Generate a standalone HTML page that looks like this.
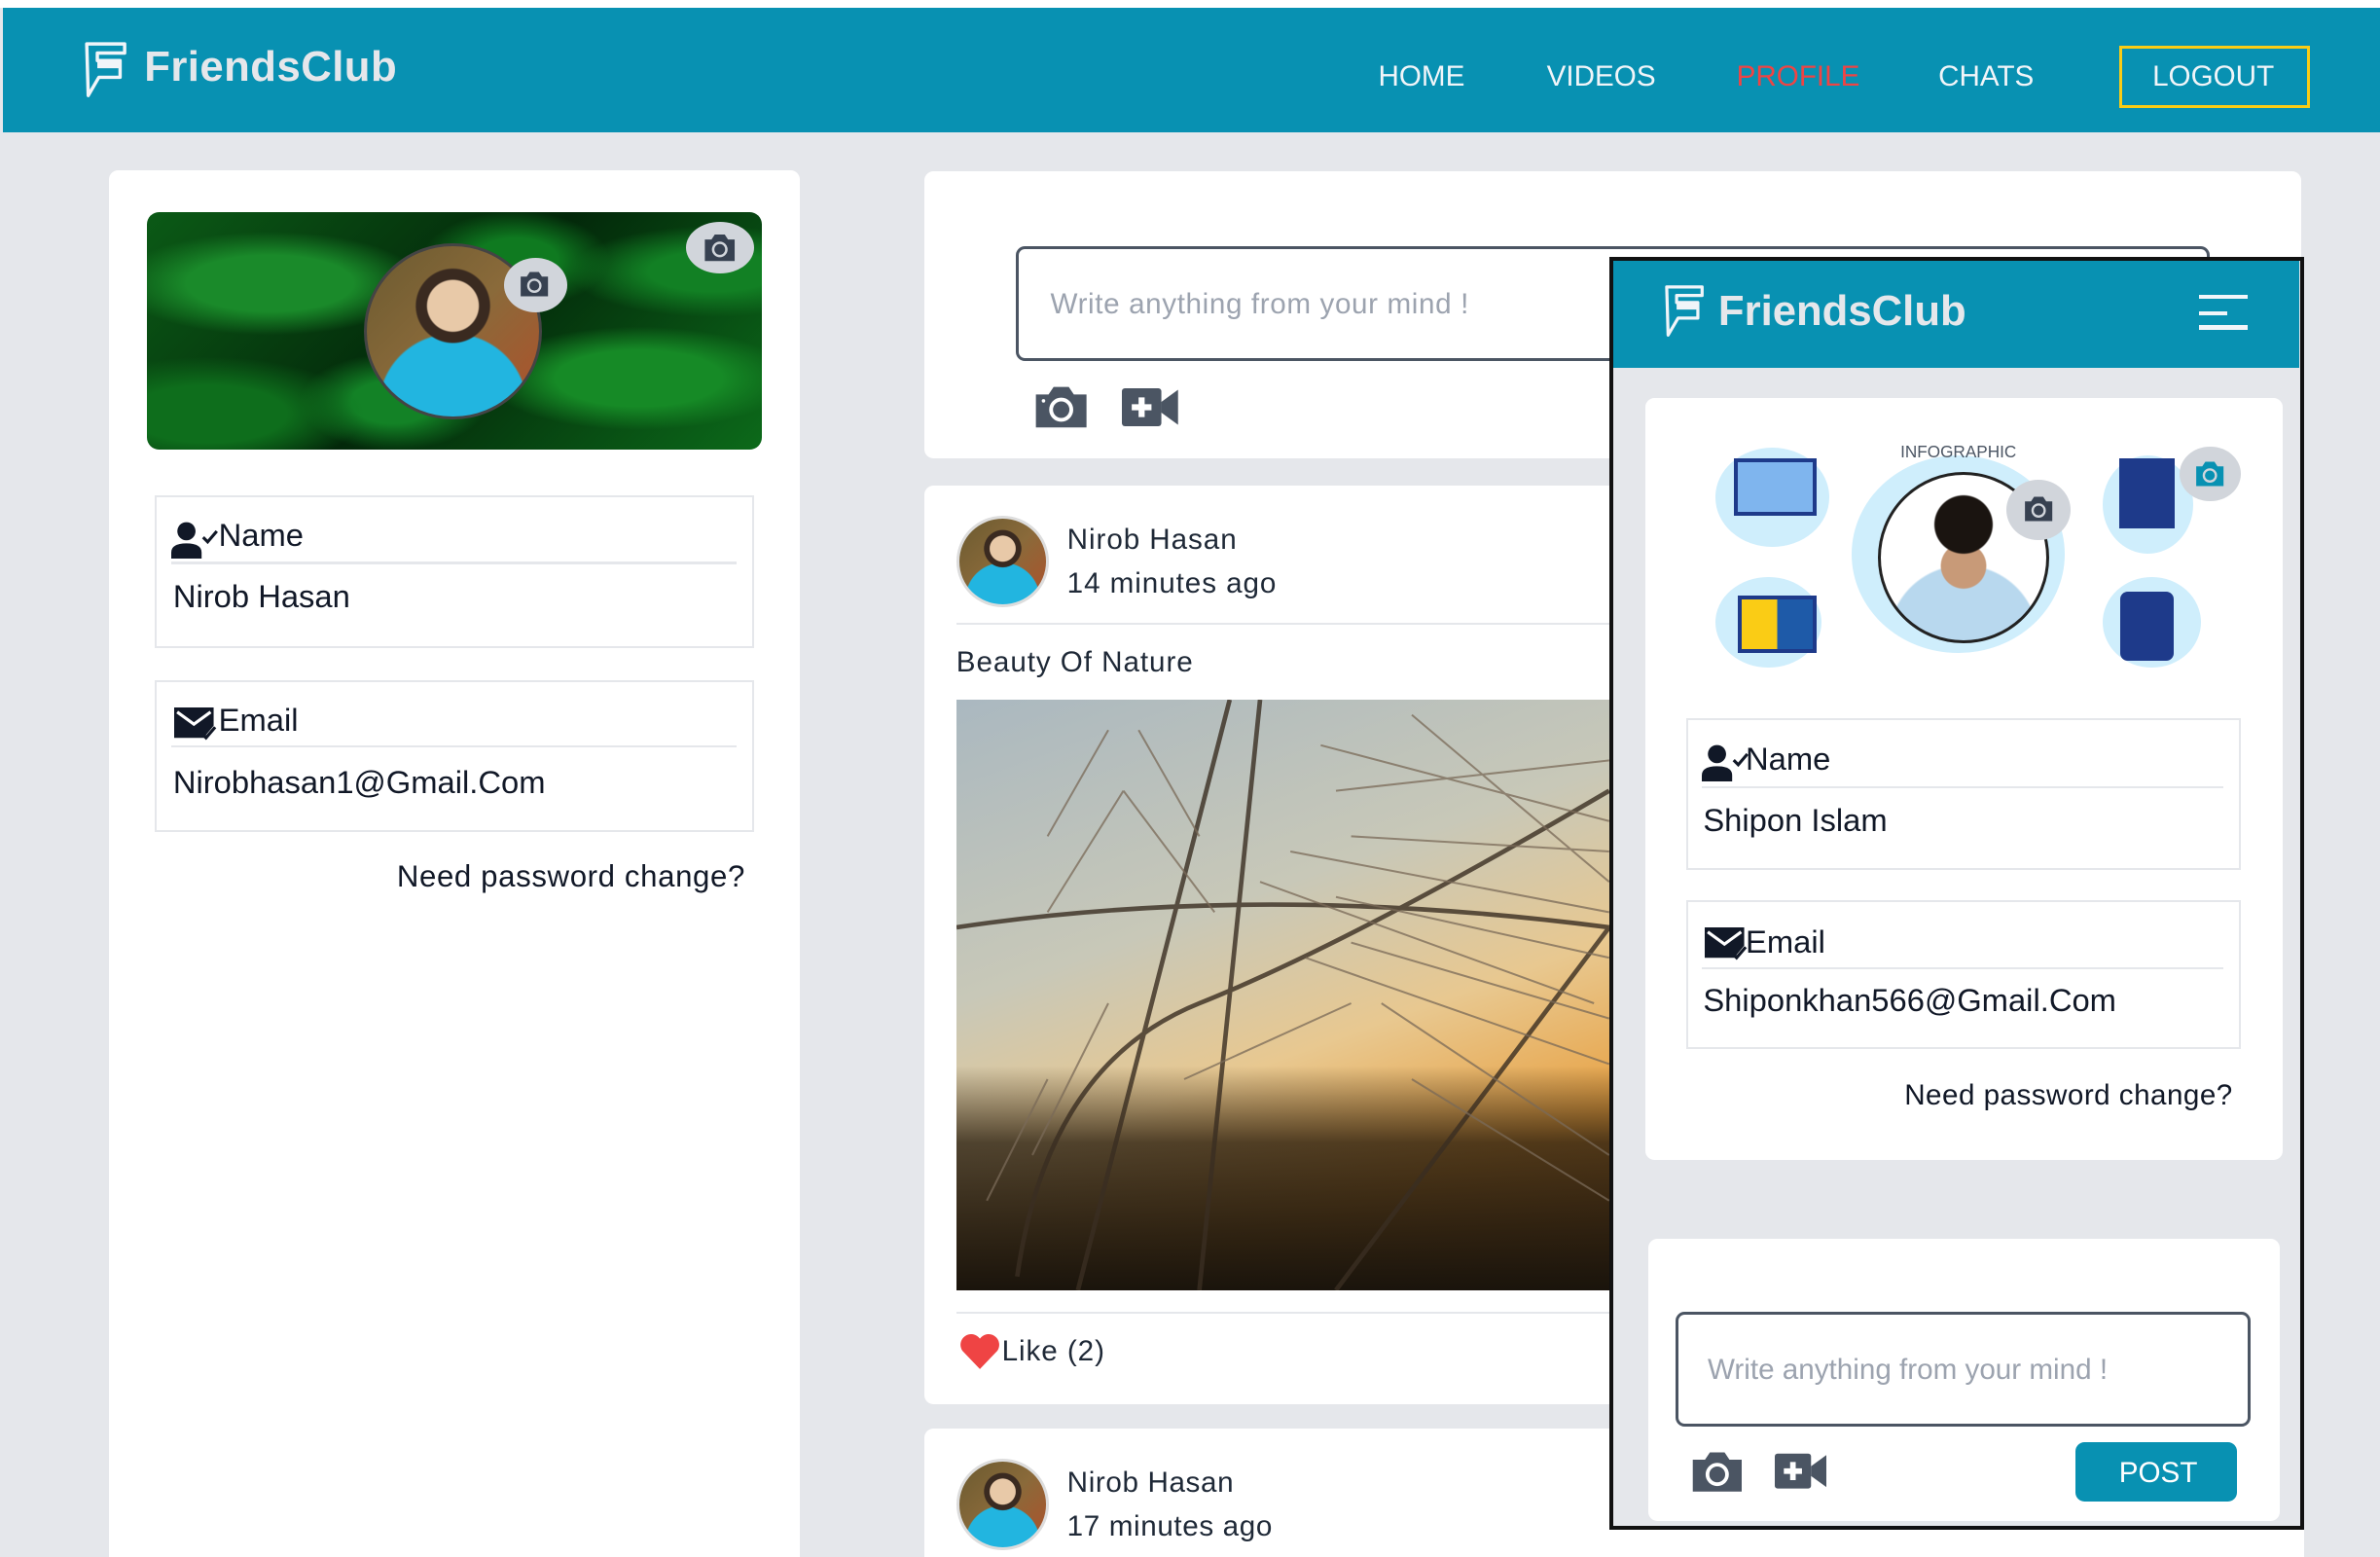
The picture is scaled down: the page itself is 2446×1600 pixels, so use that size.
<!DOCTYPE html>
<html><head><meta charset="utf-8">
<style>
*{margin:0;padding:0;box-sizing:border-box}
html,body{width:2446px;height:1600px;overflow:hidden;background:#fff}
#w{zoom:1.56;width:1568px;height:1026px;position:relative;background:#e5e7eb;font-family:"Liberation Sans",sans-serif;color:#1f2937;overflow:hidden}
.a{position:absolute}
.t{position:absolute;white-space:nowrap;line-height:1}
.card{position:absolute;background:#fff;border-radius:6px}
.box{position:absolute;border:1.5px solid #e5e7eb}
.hr{position:absolute;height:1.5px;background:#e5e7eb}
.nav{color:#f1f5f9;font-size:19px;top:41px}
.av{position:absolute;border-radius:50%;background:radial-gradient(circle at 50% 35%,#e8c9a8 0 18%,#3a2a20 19% 26%,transparent 27%),radial-gradient(circle at 50% 95%,#22b5e0 0 40%,transparent 41%),linear-gradient(135deg,#6b5a30,#8a6a3a 50%,#b0502a);border:2px solid #ddd}
.cam{position:absolute;border-radius:50%;background:#d1d5db}
</style></head><body><div id="w">
<div class="a" style="left:0;top:0;width:1568px;height:5px;background:#fff"></div>
<div class="a" style="left:2px;top:5px;width:1566px;height:82px;background:#0891b2"></div>
<svg class="a" style="left:55px;top:27px" width="30" height="38" viewBox="0 0 30 38"><path d="M2 2 H27 V8 H9 V13 H24 V24 H10 L3 36 Z" fill="none" stroke="#f1f5f9" stroke-width="2.2" stroke-linejoin="round"/><path d="M9 13 H24 V18 H9Z" fill="#f1f5f9"/></svg>
<div class="t" style="left:95px;top:30px;font-size:28px;font-weight:bold;color:#e5e7eb;letter-spacing:.3px">FriendsClub</div>
<div class="t nav" style="left:908px">HOME</div>
<div class="t nav" style="left:1019px">VIDEOS</div>
<div class="t nav" style="left:1144px;color:#ef4444">PROFILE</div>
<div class="t nav" style="left:1277px">CHATS</div>
<div class="a" style="left:1396px;top:30px;width:126px;height:41px;border:2px solid #facc15"></div>
<div class="t nav" style="left:1418px">LOGOUT</div>

<!-- left card -->
<div class="card" style="left:72px;top:112px;width:455px;height:930px"></div>
<div class="a" style="left:97px;top:140px;width:405px;height:156px;border-radius:8px;background:radial-gradient(ellipse at 20% 30%,#1a8a2a 0 12%,transparent 22%),radial-gradient(ellipse at 80% 70%,#168a26 0 12%,transparent 22%),radial-gradient(ellipse at 60% 20%,#0f7a20 0 8%,transparent 18%),radial-gradient(ellipse at 10% 85%,#0e6e1c 0 10%,transparent 20%),radial-gradient(ellipse at 40% 80%,#138226 0 8%,transparent 18%),radial-gradient(ellipse at 92% 25%,#128024 0 8%,transparent 18%),linear-gradient(135deg,#0b5a16,#03280a 50%,#0c6a1a)"></div>
<div class="av" style="left:240px;top:160px;width:117px;height:116px;border:2px solid #444"></div>
<div class="cam" style="left:332px;top:170px;width:42px;height:36px"></div>
<div class="cam" style="left:452px;top:146px;width:45px;height:34px"></div>
<svg class="a" style="left:341px;top:178px" width="22" height="18" viewBox="0 0 22 18"><path d="M2 4h4l2-3h6l2 3h4v13H2z" fill="#374151"/><circle cx="11" cy="10" r="4" fill="none" stroke="#d1d5db" stroke-width="1.5"/></svg>
<svg class="a" style="left:462px;top:153px" width="24" height="20" viewBox="0 0 22 18"><path d="M2 4h4l2-3h6l2 3h4v13H2z" fill="#374151"/><circle cx="11" cy="10" r="4" fill="none" stroke="#d1d5db" stroke-width="1.5"/></svg>

<div class="box" style="left:102px;top:326px;width:395px;height:101px"></div>
<svg class="a" style="left:113px;top:343px" width="32" height="25" viewBox="0 0 32 25"><circle cx="10" cy="7" r="6" fill="#111827"/><path d="M0 25v-4q0-6 10-6t10 6v4z" fill="#111827"/><path d="M21 11l3 3 6-7" fill="none" stroke="#111827" stroke-width="2"/></svg>
<div class="t" style="left:144px;top:342px;font-size:21px;color:#111827">Name</div>
<div class="hr" style="left:113px;top:370px;width:372px"></div>
<div class="t" style="left:114px;top:383px;font-size:21px;color:#111827">Nirob Hasan</div>
<div class="box" style="left:102px;top:448px;width:395px;height:100px"></div>
<svg class="a" style="left:115px;top:466px" width="30" height="24" viewBox="0 0 30 24"><path d="M0 0h26v12l-5 6v2H0z" fill="#111827"/><path d="M2 3l11 8 11-8" fill="none" stroke="#fff" stroke-width="2"/><path d="M18 17l3 3 6-7" fill="none" stroke="#111827" stroke-width="2"/></svg>
<div class="t" style="left:144px;top:464px;font-size:21px;color:#111827">Email</div>
<div class="hr" style="left:113px;top:491px;width:372px"></div>
<div class="t" style="left:114px;top:505px;font-size:21px;color:#111827">Nirobhasan1@Gmail.Com</div>
<div class="t" style="right:1077px;top:567px;font-size:20px;color:#111827;letter-spacing:.4px">Need password change?</div>

<!-- middle -->
<div class="card" style="left:609px;top:113px;width:907px;height:189px"></div>
<div class="a" style="left:669px;top:162px;width:787px;height:76px;border:2px solid #4b5563;border-radius:6px"></div>
<div class="t" style="left:692px;top:191px;font-size:19px;color:#9ca3af;letter-spacing:.4px">Write anything from your mind !</div>
<svg class="a" style="left:680px;top:253px" width="38" height="30" viewBox="0 0 22 18"><path d="M1 4h5l2-3h6l2 3h5v13H1z" fill="#4b5563"/><circle cx="11" cy="10" r="4" fill="none" stroke="#fff" stroke-width="1.5"/><circle cx="4" cy="6.5" r=".7" fill="#fff"/></svg>
<svg class="a" style="left:739px;top:256px" width="37" height="25" viewBox="0 0 37 25"><rect x="0" y="0" width="26" height="25" rx="2" fill="#4b5563"/><path d="M26 9l11-8v23l-11-8z" fill="#4b5563"/><path d="M13 6v13M6.5 12.5h13" stroke="#fff" stroke-width="4"/></svg>

<div class="card" style="left:609px;top:320px;width:907px;height:605px"></div>
<div class="av" style="left:630px;top:340px;width:61px;height:60px"></div>
<div class="t" style="left:703px;top:346px;font-size:19px;color:#1f2937;letter-spacing:.6px">Nirob Hasan</div>
<div class="t" style="left:703px;top:375px;font-size:19px;color:#1f2937;letter-spacing:.6px">14 minutes ago</div>
<div class="hr" style="left:630px;top:410px;width:500px"></div>
<div class="t" style="left:630px;top:427px;font-size:19px;color:#1f2937;letter-spacing:.6px">Beauty Of Nature</div>
<div class="a" style="left:630px;top:461px;width:500px;height:389px;background:linear-gradient(180deg,rgba(0,0,0,0) 0,rgba(0,0,0,0) 62%,rgba(30,22,12,.75) 75%,#1a140c 100%),linear-gradient(160deg,#aab8c0 0,#c8c8b8 35%,#e8c890 55%,#e8a040 75%,#c07020 100%)"></div>
<svg class="a" style="left:630px;top:461px" width="430" height="389" viewBox="0 0 430 389"><g fill="none" stroke="#3a2e22" stroke-width="3" opacity=".8"><path d="M0 150 Q200 120 430 150"/><path d="M40 380 Q60 240 160 200 T430 60"/><path d="M180 0 L80 389"/><path d="M200 0 L160 389"/><path d="M430 150 L250 389"/></g><g stroke="#7a6a58" stroke-width="1.3" opacity=".75">
<path d="M100 20 L60 90 M120 20 L160 90 M110 60 L60 140 M110 60 L170 140 M250 60 L430 40 M260 90 L430 100 M250 130 L430 170 M230 170 L430 240 M280 200 L430 300 M150 250 L260 200 M300 10 L430 120 M200 120 L420 200 M240 30 L430 80 M220 100 L430 140 M260 160 L430 210 M300 250 L430 330 M50 300 L100 200 M20 330 L60 250"/></g></svg>
<div class="hr" style="left:630px;top:864px;width:500px"></div>
<svg class="a" style="left:632px;top:879px" width="27" height="23" viewBox="0 0 27 23"><path d="M13.5 23 L2 11 A6.5 6.5 0 0 1 13.5 3 A6.5 6.5 0 0 1 25 11Z" fill="#ef4444"/></svg>
<div class="t" style="left:660px;top:881px;font-size:19px;color:#1f2937;letter-spacing:.6px">Like (2)</div>

<div class="card" style="left:609px;top:941px;width:907px;height:100px"></div>
<div class="av" style="left:630px;top:961px;width:61px;height:60px"></div>
<div class="t" style="left:703px;top:967px;font-size:19px;color:#1f2937;letter-spacing:.4px">Nirob Hasan</div>
<div class="t" style="left:703px;top:996px;font-size:19px;color:#1f2937;letter-spacing:.4px">17 minutes ago</div>

<!-- phone overlay -->
<div class="a" style="left:1060px;top:1006px;width:458px;height:20px;background:#fff"></div>
<div class="a" style="left:1060px;top:169px;width:458px;height:839px;border:3px solid #111;background:#e5e7eb"></div>
<div class="a" style="left:1063px;top:172px;width:452px;height:70px;background:#0891b2"></div>
<svg class="a" style="left:1096px;top:186px" width="28" height="38" viewBox="0 0 30 38"><path d="M2 2 H27 V8 H9 V13 H24 V24 H10 L3 36 Z" fill="none" stroke="#f1f5f9" stroke-width="2.2" stroke-linejoin="round"/><path d="M9 13 H24 V18 H9Z" fill="#f1f5f9"/></svg>
<div class="t" style="left:1132px;top:191px;font-size:28px;font-weight:bold;color:#e5e7eb">FriendsClub</div>
<div class="a" style="left:1449px;top:194px;width:32px;height:3px;background:#f1f5f9"></div>
<div class="a" style="left:1449px;top:205px;width:18px;height:3px;background:#f1f5f9"></div>
<div class="a" style="left:1449px;top:214px;width:32px;height:3px;background:#f1f5f9"></div>

<div class="card" style="left:1084px;top:262px;width:420px;height:502px"></div>
<div class="a" style="left:1117px;top:290px;width:361px;height:155px;background:#fff"></div>
<div class="a" style="left:1130px;top:295px;width:75px;height:65px;border-radius:50%;background:#cfeefc"></div>
<div class="a" style="left:1142px;top:302px;width:55px;height:38px;background:#7fb5ee;border:3px solid #1e3a8a"></div>
<div class="a" style="left:1130px;top:380px;width:70px;height:60px;border-radius:50%;background:#cfeefc"></div>
<div class="a" style="left:1145px;top:392px;width:52px;height:38px;background:linear-gradient(90deg,#facc15 50%,#1e5aa8 50%);border:3px solid #1e3a8a"></div>
<div class="a" style="left:1385px;top:300px;width:60px;height:65px;border-radius:50%;background:#cfeefc"></div>
<div class="a" style="left:1396px;top:302px;width:37px;height:46px;background:#1e3a8a"></div>
<div class="a" style="left:1385px;top:380px;width:65px;height:60px;border-radius:50%;background:#cfeefc"></div>
<div class="a" style="left:1397px;top:390px;width:35px;height:45px;background:#1e3a8a;border-radius:5px"></div>
<div class="a" style="left:1220px;top:300px;width:140px;height:130px;border-radius:50%;background:#cfeefc"></div>
<div class="t" style="left:1252px;top:292px;font-size:11px;color:#4b5563">INFOGRAPHIC</div>
<div class="a" style="left:1237px;top:311px;width:113px;height:113px;border-radius:50%;border:2px solid #222;background:radial-gradient(circle at 50% 30%,#1a1410 0 20%,transparent 21%),radial-gradient(circle at 50% 55%,#c89a78 0 18%,transparent 19%),radial-gradient(circle at 50% 100%,#b8d8ee 0 40%,#fff 41%)"></div>
<div class="cam" style="left:1322px;top:316px;width:42px;height:40px"></div>
<div class="cam" style="left:1436px;top:294px;width:40px;height:36px"></div>
<svg class="a" style="left:1332px;top:326px" width="22" height="18" viewBox="0 0 22 18"><path d="M2 4h4l2-3h6l2 3h4v13H2z" fill="#374151"/><circle cx="11" cy="10" r="4" fill="none" stroke="#d1d5db" stroke-width="1.5"/></svg>
<svg class="a" style="left:1445px;top:303px" width="22" height="18" viewBox="0 0 22 18"><path d="M2 4h4l2-3h6l2 3h4v13H2z" fill="#0891b2"/><circle cx="11" cy="10" r="4" fill="none" stroke="#d1d5db" stroke-width="1.5"/></svg>

<div class="box" style="left:1111px;top:473px;width:365px;height:100px"></div>
<svg class="a" style="left:1121px;top:490px" width="32" height="25" viewBox="0 0 32 25"><circle cx="10" cy="7" r="6" fill="#111827"/><path d="M0 25v-4q0-6 10-6t10 6v4z" fill="#111827"/><path d="M21 11l3 3 6-7" fill="none" stroke="#111827" stroke-width="2"/></svg>
<div class="t" style="left:1150px;top:490px;font-size:21px;color:#111827">Name</div>
<div class="hr" style="left:1121px;top:518px;width:344px"></div>
<div class="t" style="left:1122px;top:530px;font-size:21px;color:#111827">Shipon Islam</div>
<div class="box" style="left:1111px;top:593px;width:365px;height:98px"></div>
<svg class="a" style="left:1123px;top:611px" width="30" height="24" viewBox="0 0 30 24"><path d="M0 0h26v12l-5 6v2H0z" fill="#111827"/><path d="M2 3l11 8 11-8" fill="none" stroke="#fff" stroke-width="2"/><path d="M18 17l3 3 6-7" fill="none" stroke="#111827" stroke-width="2"/></svg>
<div class="t" style="left:1150px;top:610px;font-size:21px;color:#111827">Email</div>
<div class="hr" style="left:1121px;top:637px;width:344px"></div>
<div class="t" style="left:1122px;top:649px;font-size:21px;color:#111827">Shiponkhan566@Gmail.Com</div>
<div class="t" style="right:97px;top:712px;font-size:19px;color:#111827;letter-spacing:.3px">Need password change?</div>

<div class="card" style="left:1086px;top:816px;width:416px;height:186px"></div>
<div class="a" style="left:1104px;top:864px;width:379px;height:76px;border:2px solid #4b5563;border-radius:6px"></div>
<div class="t" style="left:1125px;top:893px;font-size:19px;color:#9ca3af">Write anything from your mind !</div>
<svg class="a" style="left:1113px;top:955px" width="37" height="29" viewBox="0 0 22 18"><path d="M1 4h5l2-3h6l2 3h5v13H1z" fill="#4b5563"/><circle cx="11" cy="10" r="4" fill="none" stroke="#fff" stroke-width="1.5"/></svg>
<svg class="a" style="left:1169px;top:957px" width="34" height="24" viewBox="0 0 37 25"><rect x="0" y="0" width="26" height="25" rx="2" fill="#4b5563"/><path d="M26 9l11-8v23l-11-8z" fill="#4b5563"/><path d="M13 6v13M6.5 12.5h13" stroke="#fff" stroke-width="4"/></svg>
<div class="a" style="left:1367px;top:950px;width:107px;height:39px;background:#0891b2;border-radius:6px"></div>
<div class="t" style="left:1396px;top:961px;font-size:19px;color:#fff">POST</div>
</div></body></html>
